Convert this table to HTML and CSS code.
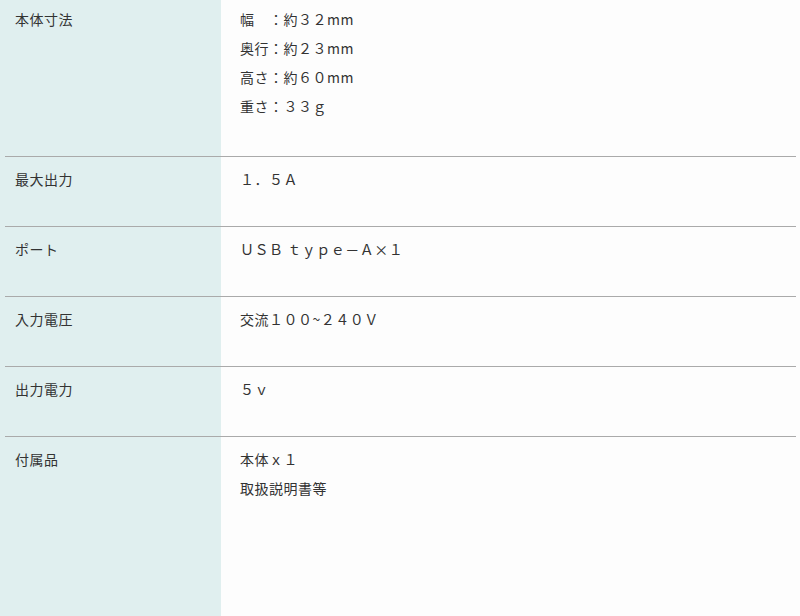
FILE: index.html
```html
<!DOCTYPE html>
<html lang="ja">
<head>
<meta charset="utf-8">
<title>仕様</title>
<link rel="stylesheet" href="styles.css">
</head>
<body>
<div class="spec">
  <div class="row row-first">
    <div class="label">本体寸法</div>
    <div class="value">
      <p>幅　：約３２mm</p>
      <p>奥行：約２３mm</p>
      <p>高さ：約６０mm</p>
      <p>重さ：３３ｇ</p>
    </div>
  </div>
  <div class="row">
    <div class="label">最大出力</div>
    <div class="value"><p>１．５Ａ</p></div>
  </div>
  <div class="row">
    <div class="label">ポート</div>
    <div class="value"><p>ＵＳＢ ｔｙｐｅ－Ａ×１</p></div>
  </div>
  <div class="row">
    <div class="label">入力電圧</div>
    <div class="value"><p>交流１００~２４０Ｖ</p></div>
  </div>
  <div class="row">
    <div class="label">出力電力</div>
    <div class="value"><p>５ｖ</p></div>
  </div>
  <div class="row row-last">
    <div class="label">付属品</div>
    <div class="value">
      <p>本体ｘ１</p>
      <p>取扱説明書等</p>
    </div>
  </div>
</div>
</body>
</html>
```

FILE: styles.css
```css
html, body {
  margin: 0;
  padding: 0;
}
body {
  width: 800px;
  height: 616px;
  overflow: hidden;
  background: #fdfdfd;
  font-family: "Noto Sans CJK JP", "Noto Sans", sans-serif;
  font-size: 14px;
  line-height: 29px;
  letter-spacing: 0.5px;
  color: #333333;
}
.spec {
  min-height: 616px;
  padding: 0 4px 0 5px;
  background: linear-gradient(to right, #e0efef 0, #e0efef 221px, #fdfdfd 221px);
}
.row {
  display: grid;
  grid-template-columns: 216px 1fr;
  height: 70px;
  box-sizing: border-box;
  border-bottom: 1px solid #aaaaaa;
}
.row-first {
  height: 157px;
}
.row-last {
  height: 180px;
  border-bottom: none;
}
.label {
  padding: 8px 0 0 10px;
}
.value {
  padding: 8px 0 0 19px;
}
.row-first .label,
.row-first .value {
  padding-top: 5px;
}
.value p {
  margin: 0;
}
```
